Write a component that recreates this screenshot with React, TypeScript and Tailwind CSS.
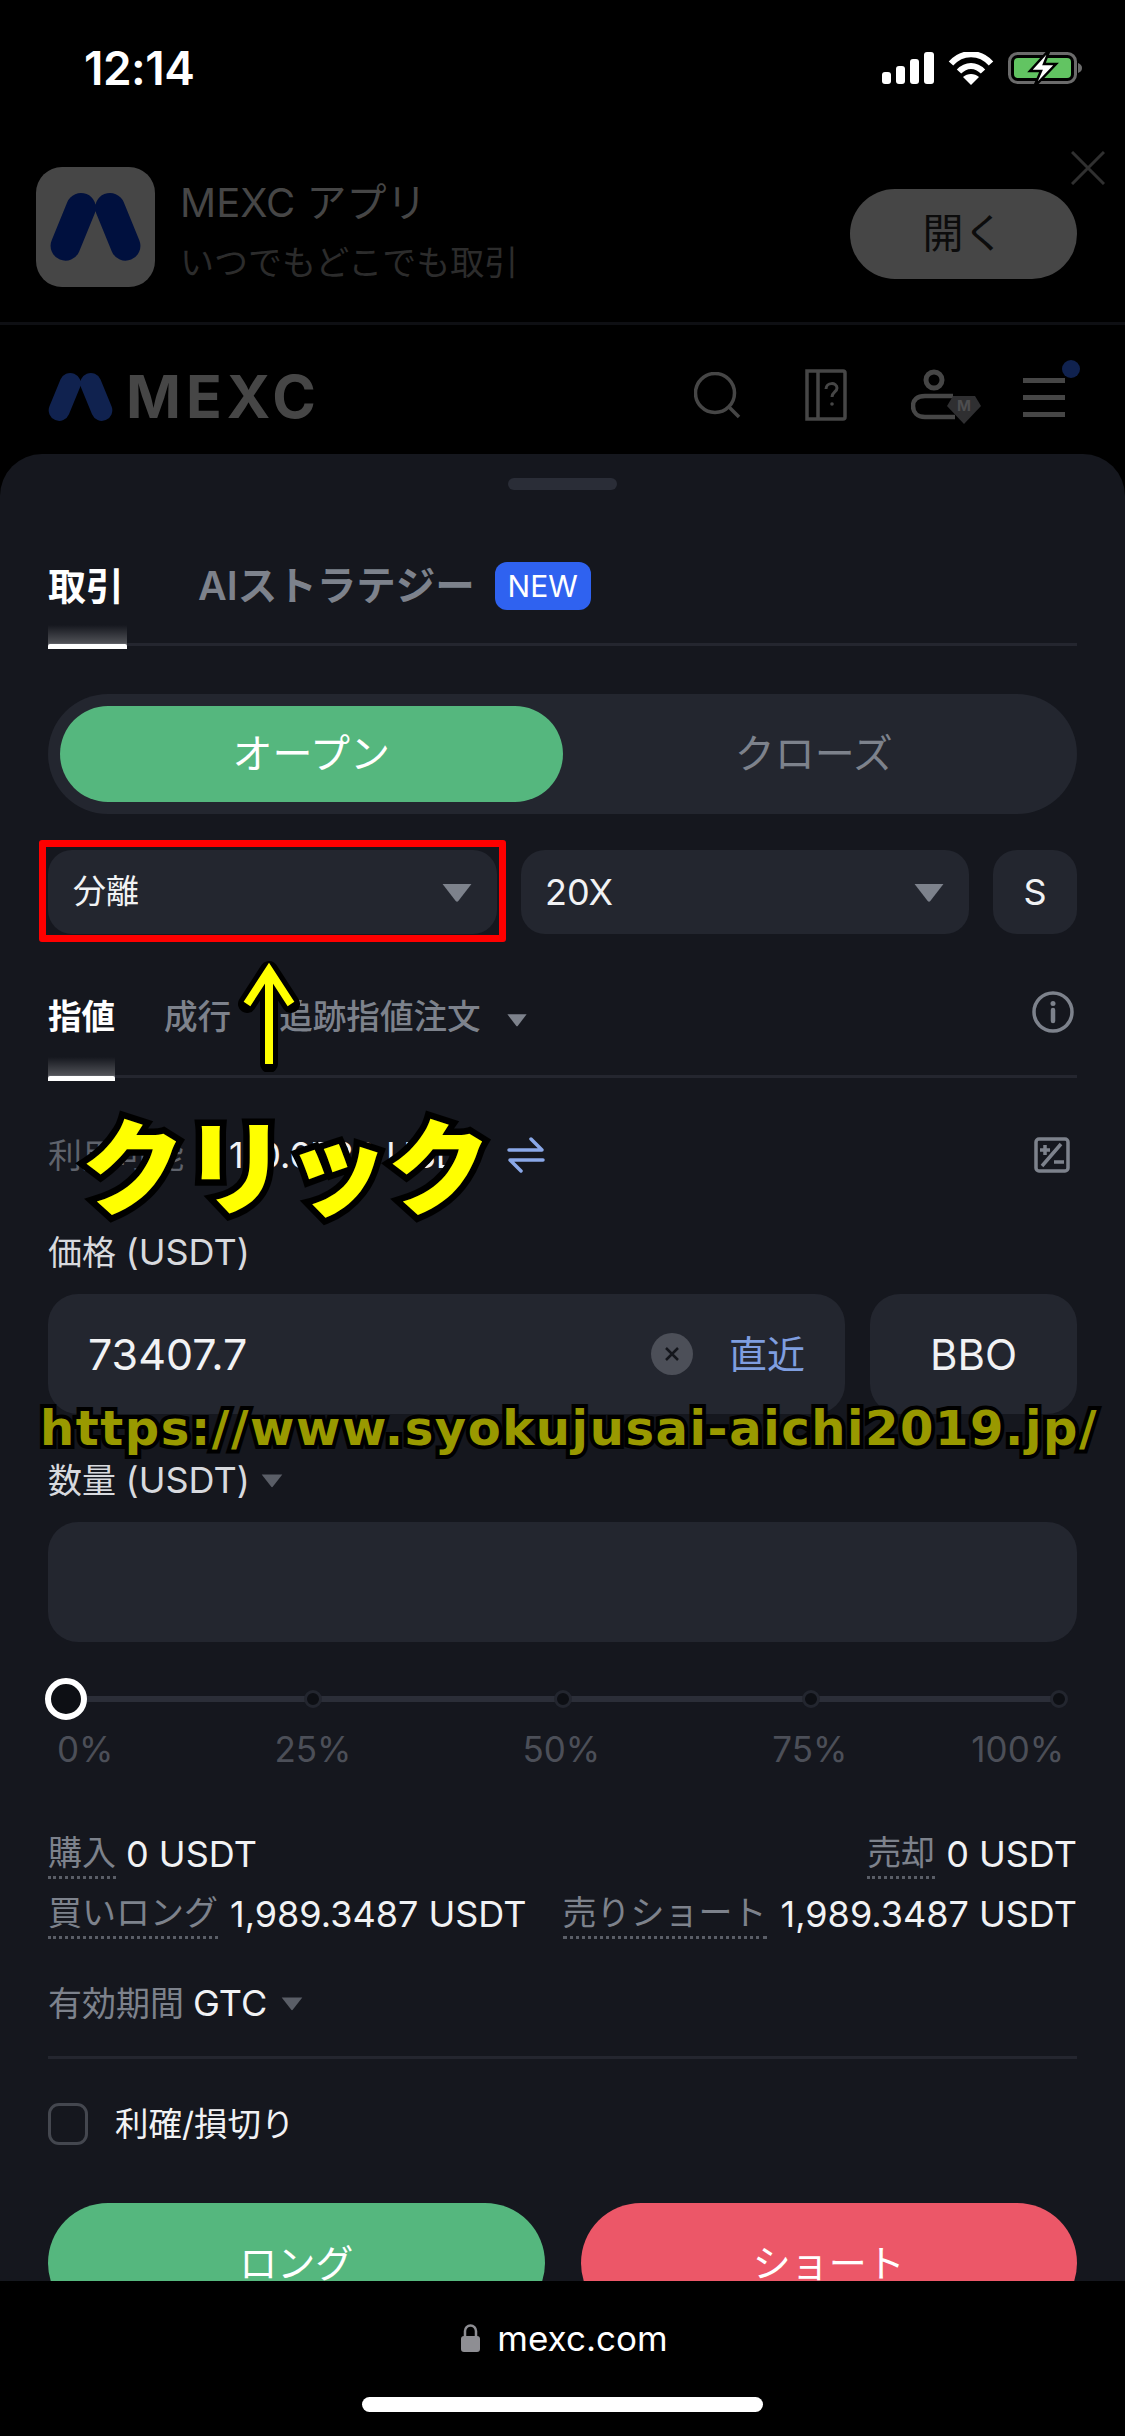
import React from "react";

const Caret = ({ cls = "", color = "#7d828c" }: { cls?: string; color?: string }) => (
  <svg viewBox="0 0 24 16" className={cls} fill={color}>
    <path d="M1 1.5h22L13 14.5a1.3 1.3 0 0 1-2 0z" />
  </svg>
);

const Mark = ({ cls, color }: { cls: string; color: string }) => (
  <svg viewBox="60 95 278 212" className={cls} fill="none" stroke={color} strokeWidth="90" strokeLinecap="round">
    <path d="M155 143 108 258M243 143 290 258" />
  </svg>
);

const Dot = () => <div className="w-[18px] h-[18px] rounded-full bg-[#0d0f14] border-[3px] border-[#23262f]" />;

const Label = ({ children }: { children: React.ReactNode }) => (
  <span className="text-[#7d828c] pb-[3px] border-b-[3px] border-dotted border-[#5a5e67] leading-[41px] h-[47px] whitespace-nowrap">{children}</span>
);

export default function App() {
  return (
    <div className="relative w-[1125px] h-[2436px] overflow-hidden bg-black flex flex-col font-['Inter','Noto_Sans_CJK_JP',sans-serif] text-[34px] text-[#f1f2f4]">
      {/* status bar */}
      <div className="h-[100px] shrink-0 pt-[36px] pl-[84px] pr-[43px] flex justify-between items-center">
        <span className="text-[46px] font-semibold text-white tracking-[-0.5px]">12:14</span>
        <div className="flex items-center">
          <svg width="52" height="32" viewBox="0 0 52 32" fill="#fff">
            <rect x="0" y="20" width="9" height="12" rx="3" />
            <rect x="14" y="14" width="9" height="18" rx="3" />
            <rect x="28" y="7" width="9" height="25" rx="3" />
            <rect x="42" y="0" width="10" height="32" rx="3" />
          </svg>
          <svg className="ml-[14px]" width="46" height="33" viewBox="0 0 46 33" fill="none" stroke="#fff" strokeWidth="6">
            <path d="M3 11.5C14-1 32-1 43 11.5" />
            <path d="M11 19.5c7-7.5 17-7.5 24 0" />
            <path d="M23 33 15 25c4.500-4 11.500-4 16 0z" fill="#fff" stroke="none" />
          </svg>
          <svg className="ml-[14px]" width="74" height="38" viewBox="0 0 74 38">
            <rect x="1.500" y="4.500" width="66" height="29" rx="8" fill="none" stroke="#6b6b6b" strokeWidth="3" />
            <rect x="6" y="9" width="57" height="20" rx="4" fill="#62c462" />
            <path d="M70 14c3 1 4 3 4 5s-1 4-4 5z" fill="#6b6b6b" />
            <path d="M42 0 22 22h11l-7 16 22-23H36z" fill="#fff" stroke="#000" strokeWidth="2.500" />
          </svg>
        </div>
      </div>

      {/* app banner */}
      <div className="relative h-[225px] shrink-0 border-b-[3px] border-[#0e0f13] flex items-start pt-[67px] pl-[36px] pr-[48px]">
        <div className="w-[119px] h-[120px] rounded-[26px] bg-[#464646] flex items-center justify-center">
          <Mark cls="w-[93px] h-[70px]" color="#00103e" />
        </div>
        <div className="ml-[25px] flex flex-col">
          <span className="text-[40px] leading-[46px] mt-[13px] text-[#464646]">MEXC アプリ</span>
          <span className="text-[34px] leading-[44px] mt-[15px] text-[#2c2c2c]">いつでもどこでも取引</span>
        </div>
        <div className="ml-auto mt-[22px] w-[227px] h-[90px] rounded-full bg-[#464646] flex items-center justify-center text-[41px] text-[#0c0c0c]">開く</div>
        <svg className="absolute right-[20px] top-[51px]" width="34" height="34" viewBox="0 0 34 34" stroke="#303030" strokeWidth="3">
          <path d="M1 1 33 33M33 1 1 33" />
        </svg>
      </div>

      {/* site header */}
      <div className="h-[129px] shrink-0 flex items-start pt-[42px] pl-[48px] relative">
        <Mark cls="w-[65px] h-[50px] mt-[5px]" color="#10224f" />
        <span className="ml-[13px] mt-[0px] text-[59px] leading-[60px] font-bold text-[#464646] tracking-[5px]">MEXC</span>
        <svg className="ml-[373px] mt-[5px]" width="47" height="47" viewBox="0 0 47 47" fill="none" stroke="#464646" strokeWidth="3.500">
          <circle cx="21" cy="21" r="19.500" />
          <path d="M35 35 45 45" />
        </svg>
        <svg className="ml-[64px] mt-[2px]" width="42" height="52" viewBox="0 0 42 52" fill="none" stroke="#464646" strokeWidth="3.500">
          <path d="M2 2h36a2 2 0 0 1 2 2v44a2 2 0 0 1-2 2H2zM13 2v48" />
          <path d="M21 20c0-7 11-7 11-1 0 4-5 4-5 9" strokeWidth="3" />
          <circle cx="27" cy="35" r="1.800" fill="#464646" stroke="none" />
        </svg>
        <svg className="ml-[64px] mt-[2px]" width="72" height="56" viewBox="0 0 72 56" fill="none">
          <circle cx="23" cy="11" r="8" stroke="#464646" strokeWidth="5" />
          <path d="M42 27H14C6 27 2 31 2 37s4 11 12 11h30" stroke="#464646" strokeWidth="4.500" />
          <path d="M42 27h22l6 10-17 18-17-18z" fill="#2f2f31" />
          <text x="53" y="42" textAnchor="middle" fontSize="15" fontWeight="700" fill="#4d4d4f">M</text>
        </svg>
        <div className="ml-[40px] mt-[11px] w-[42px] flex flex-col gap-[12px]">
          <div className="h-[5px] bg-[#464646]" />
          <div className="h-[5px] bg-[#464646]" />
          <div className="h-[5px] bg-[#464646]" />
        </div>
        <div className="absolute left-[1062px] top-[35px] w-[18px] h-[18px] rounded-full bg-[#10224f]" />
      </div>

      {/* sheet */}
      <div className="flex-1 min-h-0 overflow-hidden rounded-t-[42px] bg-[#15171e] px-[48px]">
        <div className="mt-[24px] mx-auto w-[109px] h-[12px] rounded-[6px] bg-[#2a2d37]" />

        <div className="mt-[60px] h-[96px] border-b-[3px] border-[#24262f] flex items-start">
          <div className="relative h-[96px] w-[79px]">
            <span className="block mt-[11px] text-[38px] leading-[50px] font-bold text-white whitespace-nowrap">取引</span>
            <div className="absolute left-0 right-0 bottom-[-3px] h-[24px] bg-gradient-to-b from-transparent to-[#ffffff55]" />
            <div className="absolute left-0 right-0 bottom-[-3px] h-[5px] rounded-t-[2px] bg-white" />
          </div>
          <span className="ml-[71px] mt-[11px] text-[39.500px] leading-[50px] font-semibold text-[#7d828c] whitespace-nowrap">AIストラテジー</span>
          <span className="ml-[20px] mt-[12px] w-[96px] h-[48px] rounded-[12px] bg-[#2f62f0] text-white text-[30px] flex items-center justify-center">NEW</span>
        </div>

        <div className="mt-[48px] h-[120px] rounded-[60px] bg-[#23262f] p-[12px] flex text-[40px]">
          <div className="flex-1 rounded-[48px] bg-[#55b77e] text-white flex items-center justify-center">オープン</div>
          <div className="flex-1 text-[#7d828c] flex items-center justify-center">クローズ</div>
        </div>

        <div className="mt-[36px] h-[84px] flex gap-[24px]">
          <div className="flex-1 rounded-[24px] bg-[#23262f] pl-[25px] pr-[24px] flex items-center justify-between">
            <span className="text-[33px]">分離</span>
            <Caret cls="w-[32px] h-[21px]" />
          </div>
          <div className="flex-1 rounded-[24px] bg-[#23262f] pl-[24px] pr-[24px] flex items-center justify-between">
            <span className="text-[36px]">20X</span>
            <Caret cls="w-[32px] h-[21px]" />
          </div>
          <div className="w-[84px] rounded-[24px] bg-[#23262f] flex items-center justify-center text-[36px]">S</div>
        </div>

        <div className="relative h-[144px] border-b-[3px] border-[#24262f] pt-[61px] flex items-start text-[33.600px] leading-[44px]">
          <span className="relative h-[83px] w-[67px] font-bold text-white whitespace-nowrap">
            指値
            <span className="absolute left-0 right-0 bottom-[-3px] h-[24px] bg-gradient-to-b from-transparent to-[#ffffff55]" />
            <span className="absolute left-0 right-0 bottom-[-3px] h-[5px] rounded-t-[2px] bg-white" />
          </span>
          <span className="ml-[49px] font-medium text-[#7d828c]">成行</span>
          <span className="ml-[48px] font-medium text-[#7d828c]">追跡指値注文</span>
          <Caret cls="ml-[25px] mt-[18px] w-[22px] h-[14px]" />
          <svg className="absolute right-[3px] top-[57px]" width="42" height="42" viewBox="0 0 42 42" fill="none" stroke="#7d828c" strokeWidth="3.500">
            <circle cx="21" cy="21" r="19" />
            <path d="M21 19v11" strokeWidth="4.500" strokeLinecap="round" />
            <circle cx="21" cy="12.500" r="2.500" fill="#7d828c" stroke="none" />
          </svg>
        </div>

        <div className="mt-[55px] h-[44px] flex items-center">
          <span className="text-[#5f636c]">利用可能</span>
          <span className="ml-[45px] text-[36px]">110.0722 USDT</span>
          <svg className="ml-[23px]" width="38" height="36" viewBox="0 0 38 36" fill="none" stroke="#8aa8e8" strokeWidth="3.500" strokeLinecap="round" strokeLinejoin="round">
            <path d="M2 13h33L24 2M36 23H3l11 11" />
          </svg>
          <svg className="ml-auto mr-[7px]" width="36" height="36" viewBox="0 0 36 36" fill="none" stroke="#7d828c" strokeWidth="3.500">
            <rect x="2" y="2" width="32" height="32" rx="3" />
            <path d="M27 7 8 29M6 13h10M11 8v10M20 25h10" />
          </svg>
        </div>

        <div className="mt-[53px] h-[44px] leading-[44px] text-[#d8dade]">価格 <span className="text-[36px]">(USDT)</span></div>

        <div className="mt-[20px] h-[120px] flex gap-[25px] text-[38px]">
          <div className="flex-1 rounded-[30px] bg-[#23262f] pl-[40px] pr-[40px] flex items-center">
            <span className="text-[43px]">73407.7</span>
            <div className="ml-auto w-[42px] h-[42px] rounded-full bg-[#4c4f58] flex items-center justify-center">
              <svg width="16" height="16" viewBox="0 0 16 16" stroke="#14161c" strokeWidth="2.500">
                <path d="M2 2 14 14M14 2 2 14" />
              </svg>
            </div>
            <span className="ml-[36px] text-[#7f9ee0]">直近</span>
          </div>
          <div className="w-[207px] rounded-[30px] bg-[#23262f] flex items-center justify-center text-[42px]">BBO</div>
        </div>

        <div className="mt-[44px] h-[44px] flex items-center text-[#d8dade]">
          <span>数量 <span className="text-[36px]">(USDT)</span></span>
          <Caret cls="ml-[10px] w-[24px] h-[15px]" color="#5a5e67" />
        </div>

        <div className="mt-[20px] h-[120px] rounded-[30px] bg-[#23262f]" />

        <div className="relative mt-[36px] h-[42px] flex items-center -ml-[3px]">
          <div className="absolute left-[20px] right-[12px] top-[18px] h-[6px] bg-[#2b2e38]" />
          <div className="relative w-[42px] h-[42px] rounded-full bg-[#0d0f14] border-[6px] border-white" />
          <div className="relative ml-[217px]"><Dot /></div>
          <div className="relative ml-[232px]"><Dot /></div>
          <div className="relative ml-[230px]"><Dot /></div>
          <div className="relative ml-[230px]"><Dot /></div>
        </div>

        <div className="mt-[9px] h-[40px] leading-[40px] flex text-[35px] text-[#4c4f58]">
          <span className="ml-[9px]">0%</span>
          <span className="ml-[161px]">25%</span>
          <span className="ml-[171px]">50%</span>
          <span className="ml-[172px]">75%</span>
          <span className="ml-[124px]">100%</span>
        </div>

        <div className="mt-[63px] flex justify-between">
          <div className="flex gap-[10px] items-start"><Label>購入</Label><span className="leading-[44px] text-[36px]">0 USDT</span></div>
          <div className="flex gap-[11px] items-start"><Label>売却</Label><span className="leading-[44px] text-[36px]">0 USDT</span></div>
        </div>
        <div className="mt-[13px] flex justify-between">
          <div className="flex gap-[12px] items-start"><Label>買いロング</Label><span className="leading-[44px] text-[36px]">1,989.3487 USDT</span></div>
          <div className="flex gap-[14px] items-start"><Label>売りショート</Label><span className="leading-[44px] text-[36px]">1,989.3487 USDT</span></div>
        </div>

        <div className="mt-[42px] h-[44px] flex items-center">
          <span className="text-[#7d828c]">有効期間</span>
          <span className="ml-[9px] text-[36px]">GTC</span>
          <Caret cls="ml-[13px] w-[24px] h-[15px]" color="#5a5e67" />
        </div>

        <div className="mt-[31px] h-[3px] bg-[#24262f]" />

        <div className="mt-[44px] h-[42px] flex items-center">
          <div className="w-[40px] h-[42px] rounded-[11px] border-[3px] border-[#44474f]" />
          <span className="ml-[27px] text-[33.500px]">利確/損切り</span>
        </div>

        <div className="mt-[58px] h-[120px] flex gap-[36px] text-[38px] text-white">
          <div className="flex-1 rounded-[60px] bg-[#55b77e] flex items-center justify-center">ロング</div>
          <div className="flex-1 rounded-[60px] bg-[#ec5768] flex items-center justify-center">ショート</div>
        </div>
      </div>

      {/* browser bar */}
      <div className="h-[155px] shrink-0 flex flex-col items-center">
        <div className="mt-[35px] flex items-center h-[44px] ml-[4px]">
          <svg width="19" height="28" viewBox="0 0 19 28">
            <path d="M4 13V7a5.500 5.500 0 0 1 11 0v6" fill="none" stroke="#8e8e93" strokeWidth="2.500" />
            <rect x="0" y="12" width="19" height="16" rx="3" fill="#8e8e93" />
          </svg>
          <span className="ml-[17px] text-[35px] text-white">mexc.com</span>
        </div>
        <div className="mt-[37px] w-[401px] h-[15px] rounded-full bg-white" />
      </div>

      {/* annotations laid over the screenshot */}
      <div className="absolute left-[39px] top-[840px] w-[467px] h-[102px] border-[7px] border-[#ff0000] rounded-[3px]" />
      <svg className="absolute left-[238px] top-[958px]" width="62" height="114" viewBox="0 0 62 114" fill="none" strokeLinecap="round" strokeLinejoin="miter">
        <path d="M31 12v94M9 46 31 12l22 34" stroke="#000" strokeWidth="18" strokeLinejoin="round" />
        <path d="M31 12v94M9 46 31 12l22 34" stroke="#ffff00" strokeWidth="8" strokeLinecap="butt" />
      </svg>
      <div className="absolute left-[81px] top-[1102px] text-[104px] leading-[120px] font-black text-[#ffff00] tracking-[-2px] [-webkit-text-stroke:13px_#000] [paint-order:stroke_fill] font-['Noto_Sans_CJK_JP',sans-serif] whitespace-nowrap">クリック</div>
      <div className="absolute left-[40px] top-[1398px] text-[48px] tracking-[1.600px] leading-[60px] font-bold text-[#999900] [-webkit-text-stroke:8px_#000] [paint-order:stroke_fill] font-['DejaVu_Sans',sans-serif] whitespace-nowrap">https://www.syokujusai-aichi2019.jp/</div>
    </div>
  );
}
